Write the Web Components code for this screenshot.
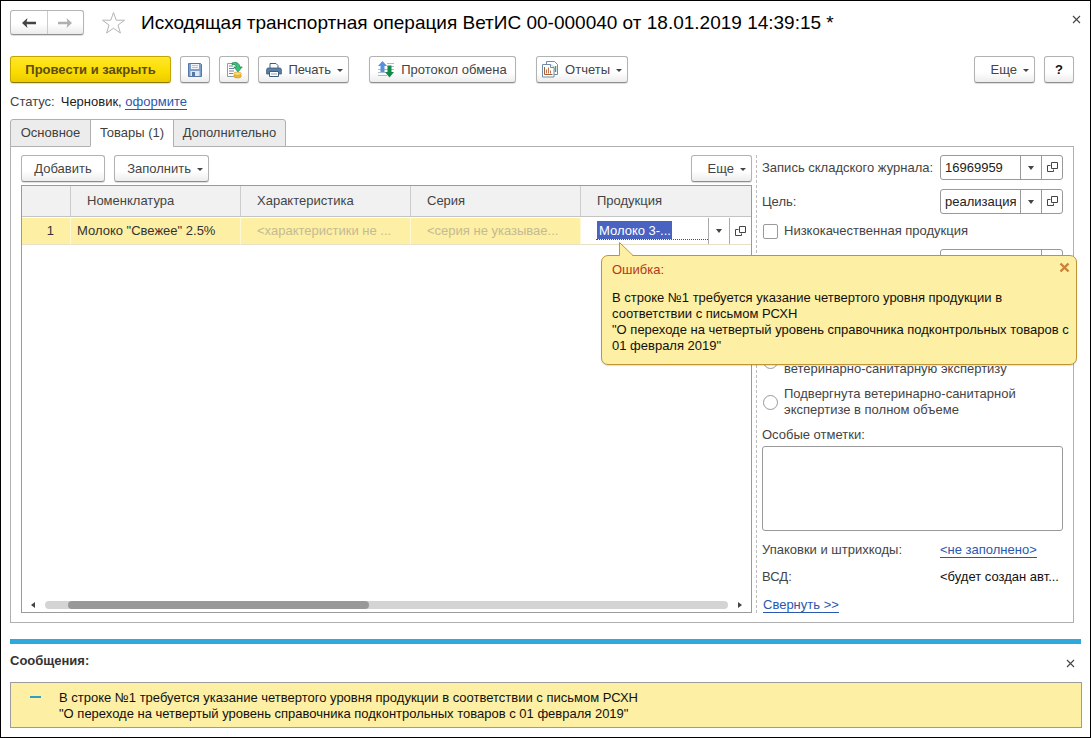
<!DOCTYPE html>
<html lang="ru">
<head>
<meta charset="utf-8">
<title>Исходящая транспортная операция ВетИС</title>
<style>
  body { margin: 0; background: #fff; color: #444; font: 13px/16px "Liberation Sans", Arial, sans-serif; }
</style>
</head>
<body>
<app-window></app-window>

<template id="tpl-window">
  <style>
    :host { display: flex; flex-direction: column; box-sizing: border-box; min-height: 100vh; padding: 9px 8px 9px 9px; border: 1px solid #000; }
    header { display: flex; align-items: center; height: 25px; }
    .star { margin: 0 15px 0 17px; flex: none; }
    h1 { margin: 0; flex: 1; font-size: 19px; line-height: 24px; font-weight: normal; color: #000; white-space: nowrap; }
    close-button { align-self: flex-start; margin-top: 4px; }
    .bar { display: flex; gap: 9px; margin: 21px 8px 11px 0; }
    .gap { margin-left: 11px; }
    .end { margin-left: auto; }
    .status { display: flex; gap: 6px; margin-bottom: 9px; }
    .status b { font-weight: normal; color: #222; }
    document-panel { flex: 1; margin-right: 8px; }
  </style>
  <header>
    <nav-buttons></nav-buttons>
    <svg class="star" width="25" height="24" viewBox="0 0 25 24" fill="#fff" stroke="#b4b4b4"><path d="M12.500 1.500 15.200 9.200 23.500 9.200 17 14.100 19.400 22 12.500 17.300 5.600 22 8 14.100 1.500 9.200 9.800 9.200z"/></svg>
    <h1>Исходящая транспортная операция ВетИС 00-000040 от 18.01.2019 14:39:15 *</h1>
    <close-button></close-button>
  </header>
  <div class="bar">
    <cmd-button primary style="--w:161px">Провести и закрыть</cmd-button>
    <cmd-button style="--w:30px" label="Записать">
      <svg slot="icon" width="16" height="16" viewBox="0 0 16 16"><path d="M1.500 1.500h12l1 1v12h-13z" fill="#7f9fc8" stroke="#5676a6"/><path d="M4 2h8v5H4z" fill="#f2f6fb"/><path d="M5 3.500h6M5 5.500h6" stroke="#9db6d6" stroke-width=".8"/><path d="M3.500 9h9v5h-9z" fill="#dfe9f4"/><path d="M5 10h3v4H5z" fill="#5676a6"/></svg>
    </cmd-button>
    <cmd-button style="--w:30px" label="Провести">
      <svg slot="icon" width="18" height="18" viewBox="0 0 18 18"><path d="M2.500 2.500h10v13h-10z" fill="#fff" stroke="#8d9aa8"/><path d="M4 5h4M4 7.500h5M4 10h5M4 12.500h4" stroke="#6d8299"/><path d="M7 2c4-1.500 7.500 0 7.800 4h2.400L13 10.800 8.800 6h2.600C11.200 4 9.500 3 7 3.600z" fill="#3cc07f" stroke="#128a4f" stroke-width=".8"/><ellipse cx="12.500" cy="15" rx="3.800" ry="2" fill="#f0b93a" stroke="#d99a1c" stroke-width=".7"/><ellipse cx="12.500" cy="12.700" rx="3.800" ry="1.700" fill="#fbdf7b" stroke="#d99a1c" stroke-width=".7"/></svg>
    </cmd-button>
    <cmd-button menu style="--w:91px">
      <svg slot="icon" width="16" height="16" viewBox="0 0 16 16"><path d="M4 1.500h6l2 2V7H4z" fill="#fff" stroke="#3c5f80"/><path d="M1.500 6h13l.9 1.500V12h-3v-2H3.600v2h-3V7.500z" fill="#5b7fa2" stroke="#3c5f80" stroke-width=".8"/><path d="M3.500 9.500h9v5h-9z" fill="#fff" stroke="#3c5f80"/><path d="M5 12h6" stroke="#8aa2b8"/></svg>
      Печать</cmd-button>
    <cmd-button class="gap" style="--w:147px">
      <svg slot="icon" width="17" height="17" viewBox="0 0 17 17"><path d="M9 2.500h7M9 5.500h7M0 8.500h16M0 11.500h9M0 14.500h9" stroke="#a9bccb"/><path d="M4.500 0 9 5H6.500v6h-4V5H0z" fill="#5a90e0"/><path d="M9.500 4.500h4V11H16l-4.500 5.500L7 11h2.500z" fill="#118a48"/></svg>
      Протокол обмена</cmd-button>
    <cmd-button class="gap" menu style="--w:92px">
      <svg slot="icon" width="17" height="17" viewBox="0 0 17 17" fill="#fff"><path d="M4.500.5h8l3 3v10h-11z" stroke="#6f8ca6"/><path d="M.5 3.500h8l3.500 3v9.500H.5z" stroke="#6f8ca6"/><path d="M8.500 3.500v3h3.500" stroke="#6f8ca6"/><path d="M13.500 5v6" stroke="#3aa35c" stroke-width="1.500"/><path d="M2.500 6v7.500h8" stroke="#98603c" fill="none"/><path d="M4.500 8.500v4M6.500 6.500v6M8.500 9.500v3" stroke="#c26f4a"/></svg>
      Отчеты</cmd-button>
    <cmd-button class="end" menu style="--w:61px">Еще</cmd-button>
    <cmd-button strong style="--w:30px">?</cmd-button>
  </div>
  <div class="status"><span>Статус:</span><b>Черновик, <ui-link>оформите</ui-link></b></div>
  <tab-bar></tab-bar>
  <document-panel></document-panel>
  <message-list></message-list>
</template>

<template id="tpl-close">
  <style>
    :host { display: block; }
    button { display: block; border: 0; padding: 0; margin: 0; background: none; width: 11px; height: 11px; }
    svg { display: block; }
  </style>
  <button type="button" aria-label="Закрыть"><svg width="11" height="11" viewBox="0 0 11 11" stroke="#444" stroke-width="1.100"><path d="M2 2l7 7M9 2l-7 7"/></svg></button>
</template>

<template id="tpl-nav">
  <style>
    :host { display: flex; box-sizing: border-box; width: 74px; height: 25px; border: 1px solid #b5b5b5; border-bottom-color: #8f8f8f; border-radius: 3px; background: linear-gradient(#fff 55%, #ececec); box-shadow: 0 1px 1px #ddd; }
    button { flex: 1; display: grid; place-items: center; border: 0; padding: 0; background: none; }
    button + button { border-left: 1px solid #ccc; }
  </style>
  <button type="button" aria-label="Назад"><svg width="14" height="10" viewBox="0 0 14 10"><path d="M0 5 5.500 0 4.600 3.800H14V6.200H4.600L5.500 10z" fill="#444"/></svg></button>
  <button type="button" aria-label="Вперед"><svg width="14" height="10" viewBox="0 0 14 10"><path d="M14 5 8.500 0 9.400 3.800H0V6.200H9.400L8.500 10z" fill="#b0b0b0"/></svg></button>
</template>

<template id="tpl-cmd">
  <style>
    :host { display: block; }
    button { display: flex; align-items: center; justify-content: center; gap: 6px; box-sizing: border-box; min-width: var(--w); height: 27px; padding: 0 5px; border: 1px solid #b2b2b2; border-bottom-color: #8e8e8e; border-radius: 3px; background: linear-gradient(#fff 60%, #ededed); box-shadow: 0 1px 1px #ddd; color: #444; font: inherit; white-space: nowrap; }
    :host([menu]) button::after { content: ""; border: 3px solid transparent; border-top: 3px solid #444; border-bottom: 0; margin-top: 2px; }
    :host([menu]) button { justify-content: flex-end; }
    :host([primary]) button { font-weight: bold; color: #5b4c10; border-color: #c3a500; border-bottom-color: #8f7a00; background: linear-gradient(#ffe72a, #fbdc00 60%, #eccb00); }
    :host([strong]) button { font-weight: bold; color: #111; }
    ::slotted(svg) { display: block; flex: none; }
  </style>
  <button type="button"><slot name="icon"></slot><span><slot></slot></span></button>
</template>

<template id="tpl-link">
  <style>
    a { color: #2a57b0; text-decoration: none; border-bottom: 1px solid #2a57b0; }
  </style>
  <a href="#"><slot></slot></a>
</template>

<template id="tpl-tabs">
  <style>
    :host { display: flex; height: 28px; margin-bottom: -1px; position: relative; z-index: 1; }
    button { box-sizing: border-box; height: 28px; padding: 0 8px; margin-left: -1px; border: 1px solid #b0b0b0; background: #ececec; color: #3f3f3f; font: inherit; min-width: 84px; }
    button:first-of-type { margin-left: 0; border-radius: 3px 0 0 0; min-width: 81px; }
    button:last-of-type { border-radius: 0 3px 0 0; min-width: 113px; }
    button[aria-selected=true] { background: #fff; border-bottom-color: #fff; }
  </style>
  <button type="button" role="tab">Основное</button>
  <button type="button" role="tab" aria-selected="true">Товары (1)</button>
  <button type="button" role="tab">Дополнительно</button>
</template>

<template id="tpl-panel">
  <style>
    :host { display: grid; grid-template-columns: minmax(0, 1fr) 307px; gap: 4px; position: relative; box-sizing: border-box; border: 1px solid #b0b0b0; padding: 8px 10px 9px; }
    section { display: flex; flex-direction: column; min-width: 0; }
    .bar { display: flex; gap: 9px; margin-bottom: 3px; }
    .end { margin-left: auto; }
    goods-table { flex: 1; }
    error-balloon { position: absolute; right: -4px; top: 95px; }
  </style>
  <section>
    <div class="bar">
      <cmd-button style="--w:84px">Добавить</cmd-button>
      <cmd-button menu style="--w:95px">Заполнить</cmd-button>
      <cmd-button class="end" menu style="--w:61px">Еще</cmd-button>
    </div>
    <goods-table></goods-table>
  </section>
  <side-form></side-form>
  <error-balloon>В строке №1 требуется указание четвертого уровня продукции в соответствии с письмом РСХН<br>"О переходе на четвертый уровень справочника подконтрольных товаров с 01 февраля 2019"</error-balloon>
</template>

<template id="tpl-goods">
  <style>
    :host { display: flex; flex-direction: column; border: 1px solid #9a9a9a; }
    table { width: 100%; table-layout: fixed; border-collapse: separate; border-spacing: 0; }
    th, td { box-sizing: border-box; text-align: left; font-weight: normal; overflow: hidden; white-space: nowrap; }
    th { height: 31px; padding: 0 16px; background: #f1f1f1; border-right: 1px solid #ccc; border-bottom: 1px solid #c4c4c4; }
    td { height: 28px; padding: 0 6px 0 16px; background: #fdefa3; border-right: 1px solid #fff8d4; border-top: 1px solid #fff; border-bottom: 1px solid #e6e0c8; color: #c4ba96; }
    th:last-child, td:last-child { border-right: 0; }
    .num { width: 49px; }
    .col { width: 170px; }
    td.num { text-align: right; padding: 0 16px 0 0; color: #333; }
    td.name { padding: 0 6px; color: #333; }
    td.edit { background: #fff; padding: 0 1px 0 15px; }
    .cell { display: flex; height: 26px; }
    .value { flex: 1; align-self: flex-start; margin-top: 3px; border-bottom: 1px dotted #d0104c; }
    input { display: block; box-sizing: border-box; width: 75px; height: 18px; margin-left: 1px; padding: 0 0 0 2px; border: 0; background: #4a62c0; color: #fff; font: inherit; }
    button { width: 21px; padding: 0; border: 0; border-left: 1px solid #aaa; background: none; display: grid; place-items: center; }
    .scroll { display: flex; align-items: center; gap: 9px; margin-top: auto; padding: 0 8px 3px; }
    .track { flex: 1; height: 8px; border-radius: 4px; background: #d4d4d4; }
    .thumb { width: 44%; height: 8px; margin-left: 23px; border-radius: 4px; background: #989898; }
  </style>
  <table>
    <thead><tr><th class="num"></th><th class="col">Номенклатура</th><th class="col">Характеристика</th><th class="col">Серия</th><th>Продукция</th></tr></thead>
    <tbody><tr>
      <td class="num">1</td><td class="name">Молоко "Свежее" 2.5%</td><td>&lt;характеристики не ...</td><td>&lt;серия не указывае...</td>
      <td class="edit"><div class="cell"><div class="value"><input aria-label="Продукция" value="Молоко 3-..."></div>
        <button type="button" aria-label="Выбрать"><svg width="6" height="4"><path d="M0 0h6L3 4z" fill="#444"/></svg></button>
        <button type="button" aria-label="Открыть"><svg width="11" height="11" viewBox="0 0 11 11" fill="none" stroke="#444"><path d="M4.500.5h6v6h-6zM3.500 3.500h-3v6h6v-2"/></svg></button></div></td>
    </tr></tbody>
  </table>
  <div class="scroll">
    <svg width="6" height="8"><path d="M5 1v6L1 4z" fill="#444"/></svg>
    <div class="track"><div class="thumb"></div></div>
    <svg width="6" height="8"><path d="M1 1v6l4-3z" fill="#444"/></svg>
  </div>
</template>

<template id="tpl-ref">
  <style>
    :host { display: flex; align-items: center; justify-content: space-between; height: 25px; white-space: nowrap; }
    .box { display: flex; box-sizing: border-box; width: 123px; height: 25px; margin-left: auto; border: 1px solid #999; border-radius: 3px; background: #fff; }
    input { flex: 1; min-width: 0; border: 0; padding: 0 4px; background: none; font: inherit; color: #222; }
    button { width: 21px; padding: 0; border: 0; border-left: 1px solid #999; background: none; display: grid; place-items: center; flex: none; }
    :host([single]) .drop { display: none; }
  </style>
  <label for="f"></label>
  <div class="box"><input id="f">
    <button class="drop" type="button" aria-label="Выбрать"><svg width="6" height="4"><path d="M0 0h6L3 4z" fill="#444"/></svg></button>
    <button type="button" aria-label="Открыть"><svg width="11" height="11" viewBox="0 0 11 11" fill="none" stroke="#444"><path d="M4.500.5h6v6h-6zM3.500 3.500h-3v6h6v-2"/></svg></button>
  </div>
</template>

<template id="tpl-side">
  <style>
    :host { display: flex; flex-direction: column; box-sizing: border-box; border-left: 1px dashed #bbb; padding-left: 5px; }
    ref-field + ref-field { margin-top: 9px; }
    .choice { display: flex; align-items: center; gap: 6px; margin-top: 9px; }
    .choice + ref-field { margin-top: 10px; }
    .choice input { appearance: none; box-sizing: border-box; flex: none; width: 15px; height: 15px; margin: 0 0 0 1px; border: 1px solid #999; border-radius: 2px; background: #fff; }
    .choice input[type=radio] { border-radius: 50%; }
    .first { margin-top: 71px; }
    .first label { padding-top: 16px; }
    .note { margin-top: 9px; }
    textarea { box-sizing: border-box; width: 100%; height: 85px; margin: 3px 0 0; border: 1px solid #999; border-radius: 3px; resize: none; font: inherit; }
    .pair { display: grid; grid-template-columns: 1fr 123px; margin-top: 11px; white-space: nowrap; }
    .pair b { font-weight: normal; color: #111; overflow: hidden; }
    .fold { margin: 12px 0 -5px 1px; }
  </style>
  <ref-field label="Запись складского журнала:" value="16969959"></ref-field>
  <ref-field label="Цель:" value="реализация"></ref-field>
  <div class="choice"><input type="checkbox" id="low"><label for="low">Низкокачественная продукция</label></div>
  <ref-field single></ref-field>
  <div class="choice first"><input type="radio" name="exam" id="r1"><label for="r1">ветеринарно-санитарную экспертизу</label></div>
  <div class="choice"><input type="radio" name="exam" id="r2"><label for="r2">Подвергнута ветеринарно-санитарной экспертизе в полном объеме</label></div>
  <label class="note" for="notes">Особые отметки:</label>
  <textarea id="notes"></textarea>
  <div class="pair"><span>Упаковки и штрихкоды:</span><ui-link>&lt;не заполнено&gt;</ui-link></div>
  <div class="pair"><span>ВСД:</span><b>&lt;будет создан авт...</b></div>
  <div class="fold"><ui-link>Свернуть &gt;&gt;</ui-link></div>
</template>

<template id="tpl-balloon">
  <style>
    :host { display: block; width: 476px; padding-top: 13px; color: #111; }
    .body { box-sizing: border-box; height: 110px; padding: 6px 6px 6px 10px; border: 1px solid #c19434; border-radius: 7px; background: #fdefa3; box-shadow: 0 1px 1px #0002; }
    .tail { position: absolute; left: 18px; top: 0; }
    .head { display: flex; justify-content: space-between; color: #b5371a; margin-bottom: 12px; }
    button { border: 0; padding: 0; background: none; width: 11px; height: 11px; }
    svg { display: block; }
  </style>
  <svg class="tail" width="16" height="15" viewBox="0 0 16 15"><path d="M.5 14V.5L14 14" fill="#fdefa3"/><path d="M.5 13.500V.5L14 13.500" fill="none" stroke="#c19434"/></svg>
  <div class="body" role="alert">
    <div class="head"><span>Ошибка:</span><button type="button" aria-label="Закрыть"><svg width="11" height="11" viewBox="0 0 11 11" stroke="#c98238" stroke-width="2.400"><path d="M1.500 1.500l8 8M9.500 1.500l-8 8"/></svg></button></div>
    <slot></slot>
  </div>
</template>

<template id="tpl-messages">
  <style>
    :host { display: block; margin-top: 16px; }
    .line { height: 5px; margin-right: 1px; background: #2fa8dc; }
    .head { display: flex; justify-content: space-between; align-items: flex-end; margin: 9px 6px 13px 0; }
    h2 { margin: 0; font-size: 13px; line-height: 16px; color: #333; }
    .box { display: flex; gap: 18px; padding: 7px 19px 5px; border: 1px solid #9c9c9c; background: #fdefa3; color: #111; }
    i { width: 11px; height: 2px; margin-top: 6px; background: #2f9fc4; flex: none; }
    p { margin: 0; }
  </style>
  <div class="line"></div>
  <div class="head"><h2>Сообщения:</h2><close-button></close-button></div>
  <div class="box"><i></i><p>В строке №1 требуется указание четвертого уровня продукции в соответствии с письмом РСХН<br>"О переходе на четвертый уровень справочника подконтрольных товаров с 01 февраля 2019"</p></div>
</template>

<script>
  class TemplateElement extends HTMLElement {
    constructor() {
      super();
      const template = document.getElementById(this.constructor.template);
      this.attachShadow({ mode: "open" }).append(template.content.cloneNode(true));
    }
  }

  class CmdButton extends TemplateElement {
    static template = "tpl-cmd";
    connectedCallback() {
      if (this.hasAttribute("label")) {
        const button = this.shadowRoot.querySelector("button");
        button.setAttribute("aria-label", this.getAttribute("label"));
        this.shadowRoot.querySelector("span").hidden = true;
      }
    }
  }

  class RefField extends TemplateElement {
    static template = "tpl-ref";
    connectedCallback() {
      this.shadowRoot.querySelector("label").textContent = this.getAttribute("label") || "";
      this.shadowRoot.querySelector("input").value = this.getAttribute("value") || "";
    }
  }

  customElements.define("ui-link", class extends TemplateElement { static template = "tpl-link"; });
  customElements.define("close-button", class extends TemplateElement { static template = "tpl-close"; });
  customElements.define("nav-buttons", class extends TemplateElement { static template = "tpl-nav"; });
  customElements.define("cmd-button", CmdButton);
  customElements.define("ref-field", RefField);
  customElements.define("tab-bar", class extends TemplateElement { static template = "tpl-tabs"; });
  customElements.define("goods-table", class extends TemplateElement { static template = "tpl-goods"; });
  customElements.define("side-form", class extends TemplateElement { static template = "tpl-side"; });
  customElements.define("error-balloon", class extends TemplateElement { static template = "tpl-balloon"; });
  customElements.define("document-panel", class extends TemplateElement { static template = "tpl-panel"; });
  customElements.define("message-list", class extends TemplateElement { static template = "tpl-messages"; });
  customElements.define("app-window", class extends TemplateElement { static template = "tpl-window"; });
</script>
</body>
</html>
